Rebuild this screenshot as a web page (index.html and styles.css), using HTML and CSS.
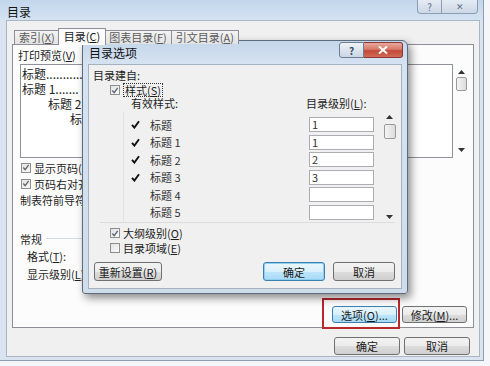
FILE: index.html
```html
<!DOCTYPE html>
<html lang="zh-CN">
<head>
<meta charset="utf-8">
<title>目录</title>
<link rel="stylesheet" href="styles.css">
</head>
<body>
<div class="window">
  <div class="titlebar">
    <span class="title">目录</span>
    <div class="caps">
      <span class="cap help">?</span>
      <span class="cap close">✕</span>
    </div>
  </div>
  <div class="client">
    <div class="tabs">
      <span class="tab t1">索引(<u>X</u>)</span>
      <span class="tab active">目录(<u>C</u>)</span>
      <span class="tab t3">图表目录(<u>F</u>)</span>
      <span class="tab t4">引文目录(<u>A</u>)</span>
    </div>
    <div class="tabpage">
      <div class="previews">
        <div class="pcol pleft">
          <div class="lbl plabel">打印预览(<u>V</u>)</div>
          <div class="pbox">
            <div class="pline">标题...........</div>
            <div class="pline">标题 1.......</div>
            <div class="pline ind2">标题 2</div>
            <div class="pline ind3">标</div>
          </div>
        </div>
        <div class="pcol pright">
          <div class="pwrap">
            <div class="pbox2"></div>
            <div class="vscroll big">
              <svg class="arr up" width="7" height="4" viewBox="0 0 7 4"><path d="M0 4 L3.5 0 L7 4 Z" fill="#333"/></svg>
              <span class="thumb"></span>
              <svg class="arr down" width="7" height="4" viewBox="0 0 7 4"><path d="M0 0 L3.5 4 L7 0 Z" fill="#333"/></svg>
            </div>
          </div>
        </div>
      </div>
      <div class="chkrow r1"><span class="cb on"><svg width="9" height="9" viewBox="0 0 9 9"><path d="M1.5 4.5 L3.6 7 L7.5 1.5" fill="none" stroke="#5a6470" stroke-width="1.5"/></svg></span><span>显示页码(<u>S</u>)</span></div>
      <div class="chkrow r2"><span class="cb on"><svg width="9" height="9" viewBox="0 0 9 9"><path d="M1.5 4.5 L3.6 7 L7.5 1.5" fill="none" stroke="#5a6470" stroke-width="1.5"/></svg></span><span>页码右对齐(<u>R</u>)</span></div>
      <div class="lbl leader">制表符前导符(<u>B</u>):</div>
      <div class="group"><span>常规</span><span class="gline"></span></div>
      <div class="lbl field f1">格式(<u>T</u>):</div>
      <div class="lbl field f2">显示级别(<u>L</u>):</div>
      <div class="pagebtns">
        <span class="btn hot">选项(<u>O</u>)...</span>
        <span class="btn">修改(<u>M</u>)...</span>
      </div>
    </div>
    <div class="footer">
      <span class="btn fbtn">确定</span>
      <span class="btn fbtn">取消</span>
    </div>
  </div>
</div>

<div class="redbox"></div>

<div class="dialog">
  <div class="dlg-title">
    <span class="dlg-name">目录选项</span>
    <div class="dcaps">
      <span class="dcap dhelp">?</span>
      <span class="dcap dclose"><svg width="10" height="8" viewBox="0 0 10 8"><path d="M1 0.5 L9 7.5 M9 0.5 L1 7.5" stroke="#fff" stroke-width="2"/></svg></span>
    </div>
  </div>
  <div class="dlg-client">
    <div class="lbl d-lbl">目录建自:</div>
    <div class="chkrow d-chk"><span class="cb on"><svg width="9" height="9" viewBox="0 0 9 9"><path d="M1.5 4.5 L3.6 7 L7.5 1.5" fill="none" stroke="#5a6470" stroke-width="1.5"/></svg></span><span class="focus">样式(<u>S</u>)</span></div>
    <div class="d-heads"><span class="h1">有效样式:</span><span class="h2">目录级别(<u>L</u>):</span></div>
    <div class="d-list">
      <div class="rows">
        <div class="row"><span class="tick"><svg width="9" height="9" viewBox="0 0 9 9"><path d="M1 4.8 L3.4 7.6 L8 1.2" fill="none" stroke="#111" stroke-width="1.9"/></svg></span><span class="name">标题</span><span class="lvl">1</span></div>
        <div class="row"><span class="tick"><svg width="9" height="9" viewBox="0 0 9 9"><path d="M1 4.8 L3.4 7.6 L8 1.2" fill="none" stroke="#111" stroke-width="1.9"/></svg></span><span class="name">标题 1</span><span class="lvl">1</span></div>
        <div class="row"><span class="tick"><svg width="9" height="9" viewBox="0 0 9 9"><path d="M1 4.8 L3.4 7.6 L8 1.2" fill="none" stroke="#111" stroke-width="1.9"/></svg></span><span class="name">标题 2</span><span class="lvl">2</span></div>
        <div class="row"><span class="tick"><svg width="9" height="9" viewBox="0 0 9 9"><path d="M1 4.8 L3.4 7.6 L8 1.2" fill="none" stroke="#111" stroke-width="1.9"/></svg></span><span class="name">标题 3</span><span class="lvl">3</span></div>
        <div class="row"><span class="tick"></span><span class="name">标题 4</span><span class="lvl"></span></div>
        <div class="row"><span class="tick"></span><span class="name">标题 5</span><span class="lvl"></span></div>
      </div>
      <div class="vscroll small">
        <svg class="arr up" width="7" height="4" viewBox="0 0 7 4"><path d="M0 4 L3.5 0 L7 4 Z" fill="#333"/></svg>
        <span class="thumb"></span>
        <svg class="arr down" width="7" height="4" viewBox="0 0 7 4"><path d="M0 0 L3.5 4 L7 0 Z" fill="#333"/></svg>
      </div>
    </div>
    <div class="d-sep"></div>
    <div class="chkrow d-c1"><span class="cb on"><svg width="9" height="9" viewBox="0 0 9 9"><path d="M1.5 4.5 L3.6 7 L7.5 1.5" fill="none" stroke="#5a6470" stroke-width="1.5"/></svg></span><span>大纲级别(<u>O</u>)</span></div>
    <div class="chkrow d-c2"><span class="cb"></span><span>目录项域(<u>E</u>)</span></div>
    <div class="d-btns">
      <span class="btn reset">重新设置(<u>R</u>)</span>
      <span class="btn dbtn default">确定</span>
      <span class="btn dbtn">取消</span>
    </div>
  </div>
</div>
</body>
</html>
```
FILE: styles.css
```css
* { box-sizing: border-box; }
html, body { margin: 0; padding: 0; }
body {
  width: 490px;
  height: 366px;
  overflow: hidden;
  position: relative;
  background: #f4f6f9;
  font-family: "Noto Sans CJK SC", "Liberation Sans", sans-serif;
  font-size: 11px;
  color: #1e1e1e;
}
u { text-decoration: underline; text-underline-offset: 1px; }

/* outer window */
.window {
  width: 484px;
  height: 361px;
  background: #d9e4f0;
  border-right: 1px solid #8e9db0;
  border-bottom: 1px solid #8e9db0;
  display: flex;
  flex-direction: column;
}
.titlebar {
  height: 20px;
  flex: none;
  display: flex;
  align-items: center;
  padding-left: 7px;
  background: linear-gradient(#c2d6ec, #d4e3f2);
}
.title { font-size: 12px; line-height: 14px; color: #111; margin-top: 3px; }
.caps { margin-left: auto; align-self: flex-start; display: flex; margin-right: 5px; }
.cap {
  height: 14px;
  display: flex;
  align-items: center;
  justify-content: center;
  border: 1px solid #8d9db3;
  border-top: none;
  background: linear-gradient(#e4ebf3, #cdd8e5);
  color: #5c6f88;
  font-size: 10px;
  line-height: 10px;
}
.cap.help { width: 25px; border-radius: 0 0 0 4px; }
.cap.close { width: 36px; border-left: none; border-radius: 0 0 4px 0; font-size: 9px; }

.client {
  flex: 1;
  margin: 0 3px 3px 6px;
  background: #f0f0f0;
  border: 1px solid #aab6c4;
  padding: 7px 5px 0 5px;
  display: flex;
  flex-direction: column;
}

/* tabs */
.tabs {
  height: 16px;
  display: flex;
  align-items: flex-end;
  padding-left: 2px;
  position: relative;
  z-index: 1;
}
.tab {
  height: 14px;
  padding: 0 4px;
  border: 1px solid #8c8f96;
  border-bottom: none;
  border-right: none;
  background: linear-gradient(#f3f3f3, #e2e2e2);
  color: #5a5a5a;
  line-height: 12px;
  font-size: 11px;
  white-space: nowrap;
}
.tab.t4 { border-right: 1px solid #8c8f96; }
.tab.active {
  height: 17px;
  margin-bottom: -1px;
  background: #fcfcfc;
  color: #1a1a1a;
  border-right: 1px solid #8c8f96;
  padding: 1px 5px 0;
  margin-left: -1px;
  margin-right: -1px;
  position: relative;
}
.tab.t3 { border-left: none; }

.tabpage {
  height: 284px;
  flex: none;
  border: 1px solid #8c8f96;
  background: #fcfcfc;
  padding: 3px 6px 0 7px;
  display: flex;
  flex-direction: column;
}
.lbl { height: 14px; line-height: 14px; white-space: nowrap; }
.plabel { margin-left: -2px; }
.previews { display: flex; justify-content: space-between; height: 110px; flex: none; }
.pcol { display: flex; flex-direction: column; }
.pleft { width: 228px; }
.pright { width: 205px; padding-top: 14px; }
.pbox {
  margin-top: 2px;
  height: 94px;
  border: 1px solid #8f9399;
  background: #fff;
  padding: 1px 0 0 1px;
  overflow: hidden;
}
.pline { font-size: 12px; line-height: 15px; white-space: nowrap; color: #222; }
.pline.ind2 { padding-left: 26px; }
.pline.ind3 { padding-left: 48px; }
.pwrap { margin-top: 2px; display: flex; height: 94px; }
.pbox2 { flex: 1; border: 1px solid #8f9399; background: #fff; }

.vscroll {
  display: flex;
  flex-direction: column;
  align-items: center;
}
.vscroll.big { width: 12px; margin-left: 2px; padding-top: 6px; }
.vscroll.big .thumb { margin-top: 3px; width: 11px; height: 14px; }
.vscroll.big .down { margin-top: auto; margin-bottom: 6px; }
.thumb {
  border: 1px solid #9a9a9a;
  border-radius: 2px;
  background: linear-gradient(90deg, #f4f4f4, #dcdcdc);
}
.arr { display: block; flex: none; }

.chkrow { display: flex; align-items: center; gap: 3px; height: 15px; white-space: nowrap; }
.cb {
  width: 10px;
  height: 10px;
  flex: none;
  border: 1px solid #8e8f91;
  background: linear-gradient(135deg, #e2e2e2, #fafafa);
  display: flex;
  align-items: center;
  justify-content: center;
}
.cb svg { display: block; }
.r1 { margin-top: 2px; padding-left: 1px; }
.r2 { margin-top: 1px; padding-left: 1px; }
.leader { margin-top: 2px; height: 15px; line-height: 15px; }
.group { margin-top: 23px; height: 15px; display: flex; align-items: center; gap: 4px; white-space: nowrap; }
.gline { width: 190px; height: 1px; background: #d5dae0; flex: none; }
.field { height: 15px; line-height: 15px; padding-left: 7px; }
.f1 { margin-top: 3px; }
.f2 { margin-top: 3px; }

.btn {
  display: flex;
  align-items: center;
  justify-content: center;
  border: 1px solid #707070;
  border-radius: 3px;
  background: linear-gradient(#f3f3f3 0%, #ebebeb 50%, #dddddd 51%, #cfcfcf 100%);
  white-space: nowrap;
  color: #1a1a1a;
}
.pagebtns { margin-top: 24px; display: flex; justify-content: flex-end; gap: 5px; }
.pagebtns .btn { width: 65px; height: 17px; }
.btn.hot {
  border-color: #3c7fb1;
  background: linear-gradient(#eaf6fd 0%, #d9f0fc 50%, #bee6fd 51%, #a7d9f5 100%);
}
.footer { margin-top: 9px; display: flex; justify-content: flex-end; gap: 4px; padding-right: 4px; }
.fbtn { width: 66px; height: 18px; }

/* highlight drawn over the screenshot */
.redbox {
  position: absolute;
  left: 322px;
  top: 298px;
  width: 78px;
  height: 31px;
  border: 2px solid #b8282c;
}

/* options dialog */
.dialog {
  position: absolute;
  left: 82px;
  top: 40px;
  width: 326px;
  height: 254px;
  border: 1px solid #5e6b7c;
  border-radius: 6px 6px 3px 3px;
  background: linear-gradient(#c5d7eb 0, #d6e3f1 24px, #cfdcec 100%);
  padding: 0 5px 4px 5px;
  box-shadow: 3px 4px 9px rgba(0, 0, 0, 0.45);
  display: flex;
  flex-direction: column;
}
.dlg-title { height: 23px; flex: none; display: flex; align-items: flex-start; }
.dlg-name { font-size: 12px; line-height: 14px; margin-top: 5px; padding-left: 1px; color: #111; }
.dcaps { margin-left: auto; display: flex; margin-right: -1px; margin-top: 1px; }
.dcap {
  height: 16px;
  display: flex;
  align-items: center;
  justify-content: center;
  border: 1px solid #6f7e92;
}
.dhelp {
  width: 25px;
  border-radius: 3px 0 0 3px;
  background: linear-gradient(#eef3f8, #c9d6e4);
  color: #3d4d62;
  font-size: 10px;
  font-weight: bold;
}
.dclose {
  width: 39px;
  border-left: none;
  border-radius: 0 3px 3px 0;
  border-color: #8a3a34;
  background: linear-gradient(#e9a99c 0%, #d7786a 45%, #c4493a 55%, #d06a55 100%);
}
.dcap svg { display: block; }

.dlg-client {
  flex: 1;
  background: #f0f0f0;
  border: 1px solid #a4b1c1;
  padding: 3px 6px 0 0;
  display: flex;
  flex-direction: column;
}
.d-lbl { padding-left: 4px; }
.d-chk { margin-top: 1px; padding-left: 21px; height: 14px; }
.focus { border: 1px dotted #333; padding: 0 1px; line-height: 12px; }
.d-heads { height: 13px; line-height: 13px; display: flex; white-space: nowrap; }
.h1 { margin-left: 42px; }
.h2 { margin-left: 128px; }
.d-list {
  margin-top: 2px;
  margin-left: 34px;
  width: 275px;
  height: 110px;
  flex: none;
  border-left: 1px solid #e2e2e2;
  display: flex;
}
.rows { width: 259px; padding: 4px 0 0 7px; }
.row {
  height: 17.5px;
  display: grid;
  grid-template-columns: 19px 159px 65px;
  align-items: center;
}
.tick { display: flex; align-items: center; }
.tick svg { display: block; }
.name { color: #333; font-size: 11px; }
.lvl {
  height: 15px;
  border: 1px solid #abadb3;
  background: #fff;
  padding-left: 2px;
  line-height: 13px;
  font-size: 11px;
  color: #333;
}
.vscroll.small { width: 13px; padding-top: 3px; margin-left: 0; }
.vscroll.small .thumb { margin-top: 5px; width: 12px; height: 15px; }
.vscroll.small .down { margin-top: auto; margin-bottom: 3px; }
.d-sep { height: 1px; background: #dcdcdc; margin-left: 11px; flex: none; }
.d-c1 { margin-top: 3px; padding-left: 21px; height: 14px; }
.d-c2 { margin-top: 1px; padding-left: 21px; height: 14px; }
.d-btns { margin-top: 7px; display: flex; padding-left: 5px; }
.d-btns .btn { height: 19px; }
.reset { width: 68px; }
.dbtn { width: 62px; }
.dbtn.default { margin-left: auto; }
.dbtn + .dbtn { margin-left: 8px; }
.btn.default {
  border-color: #3c7fb1;
  background: linear-gradient(#eaf6fd 0%, #d9f0fc 50%, #bee6fd 51%, #a7d9f5 100%);
  box-shadow: inset 0 0 0 1px #8fd0f0;
}
```
